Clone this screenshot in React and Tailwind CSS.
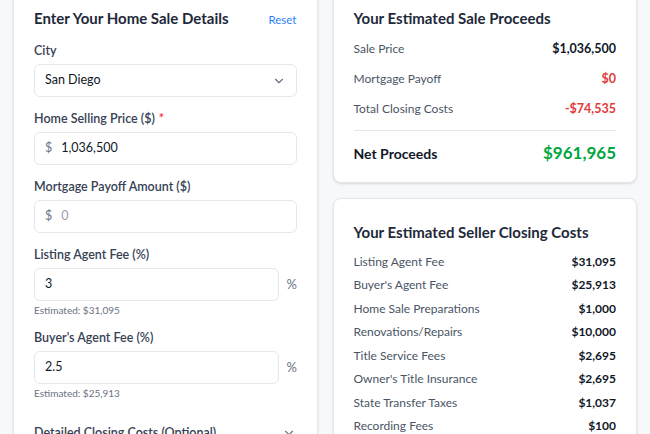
import React from "react";
import { ChevronDown } from "lucide-react";

const closingCosts = [
  ["Listing Agent Fee", "$31,095"],
  ["Buyer's Agent Fee", "$25,913"],
  ["Home Sale Preparations", "$1,000"],
  ["Renovations/Repairs", "$10,000"],
  ["Title Service Fees", "$2,695"],
  ["Owner's Title Insurance", "$2,695"],
  ["State Transfer Taxes", "$1,037"],
  ["Recording Fees", "$100"],
];

function Label({ children, required }) {
  return (
    <div className="text-[12.5px] leading-[18px] font-semibold text-gray-700 mb-1">
      {children}
      {required && <span className="text-red-500 ml-1">*</span>}
    </div>
  );
}

function MoneyInput({ value, muted }) {
  return (
    <div className="h-[33px] rounded-md border border-gray-200 bg-white flex items-center px-[10px] text-[12.5px]">
      <span className="text-gray-500 mr-[9px]">$</span>
      <span className={muted ? "text-gray-400" : "text-gray-900"}>{value}</span>
    </div>
  );
}

function PercentInput({ value, estimate }) {
  return (
    <div>
      <div className="flex items-center gap-2">
        <div className="flex-1 h-[33px] rounded-md border border-gray-200 bg-white flex items-center px-[10px] text-[12.5px] text-gray-900">
          {value}
        </div>
        <span className="text-[13px] text-gray-500 w-[10px]">%</span>
      </div>
      <div className="text-[10px] leading-4 text-gray-500 mt-[1px]">Estimated: {estimate}</div>
    </div>
  );
}

export default function App() {
  return (
    <div className="h-[434px] overflow-hidden bg-[#f7f8fa]" style={{ fontFamily: 'Lato, "Noto Sans", sans-serif' }}>
      <div className="grid grid-cols-2 gap-[15px] px-[13px] -mt-[17px]">
        <div className="bg-white border border-gray-200 rounded-lg shadow-sm px-5 pt-5 pb-5 h-[520px]">
          <div className="flex items-center justify-between">
            <h2 className="text-[15px] leading-7 font-bold text-gray-800">Enter Your Home Sale Details</h2>
            <button className="text-[11.5px] text-blue-500 mt-[3px]">Reset</button>
          </div>
          <div className="mt-[10px] flex flex-col gap-[13px]">
            <div>
              <Label>City</Label>
              <div className="h-[33px] rounded-md border border-gray-200 bg-white flex items-center justify-between px-[10px] text-[12.5px] text-gray-900">
                <span>San Diego</span>
                <ChevronDown size={14} className="text-gray-500" />
              </div>
            </div>
            <div>
              <Label required>Home Selling Price ($)</Label>
              <MoneyInput value="1,036,500" />
            </div>
            <div>
              <Label>Mortgage Payoff Amount ($)</Label>
              <MoneyInput value="0" muted />
            </div>
            <div>
              <Label>Listing Agent Fee (%)</Label>
              <PercentInput value="3" estimate="$31,095" />
            </div>
            <div className="-mt-[2px]">
              <Label>Buyer's Agent Fee (%)</Label>
              <PercentInput value="2.5" estimate="$25,913" />
            </div>
            <div className="flex items-center justify-between mt-[10px]">
              <span className="text-[12.5px] font-semibold text-gray-700">Detailed Closing Costs (Optional)</span>
              <ChevronDown size={14} className="text-gray-500 mr-[1px]" />
            </div>
          </div>
        </div>

        <div className="flex flex-col gap-[15px]">
          <div className="bg-white border border-gray-200 rounded-lg shadow-sm px-5 pt-5 pb-[15px]">
            <h2 className="text-[15px] leading-7 font-bold text-gray-800">Your Estimated Sale Proceeds</h2>
            <div className="mt-[2px] text-[12px]">
              <div className="flex justify-between items-center py-[6px] leading-[18px]">
                <span className="text-gray-600">Sale Price</span>
                <span className="font-bold text-gray-900 text-[12.5px]">$1,036,500</span>
              </div>
              <div className="flex justify-between items-center py-[6px] leading-[18px]">
                <span className="text-gray-600">Mortgage Payoff</span>
                <span className="font-bold text-[#e03c3c] text-[12.5px]">$0</span>
              </div>
              <div className="flex justify-between items-center py-[6px] leading-[18px]">
                <span className="text-gray-600">Total Closing Costs</span>
                <span className="font-bold text-[#e03c3c] text-[12.5px]">-$74,535</span>
              </div>
              <div className="border-t border-gray-200 mt-[6px] pt-[8px] flex justify-between items-center">
                <span className="text-[14px] font-bold text-gray-900">Net Proceeds</span>
                <span className="text-[17px] leading-7 font-bold text-green-600">$961,965</span>
              </div>
            </div>
          </div>

          <div className="bg-white border border-gray-200 rounded-lg shadow-sm px-5 pt-[19px] pb-5 h-[260px]">
            <h2 className="text-[15px] leading-7 font-bold text-gray-800">Your Estimated Seller Closing Costs</h2>
            <div className="mt-[4px] text-[12px]">
              {closingCosts.map(([name, value]) => (
                <div key={name} className="flex justify-between leading-[18px] py-[2.75px]">
                  <span className="text-gray-600">{name}</span>
                  <span className="font-bold text-gray-900">{value}</span>
                </div>
              ))}
            </div>
          </div>
        </div>
      </div>
    </div>
  );
}
